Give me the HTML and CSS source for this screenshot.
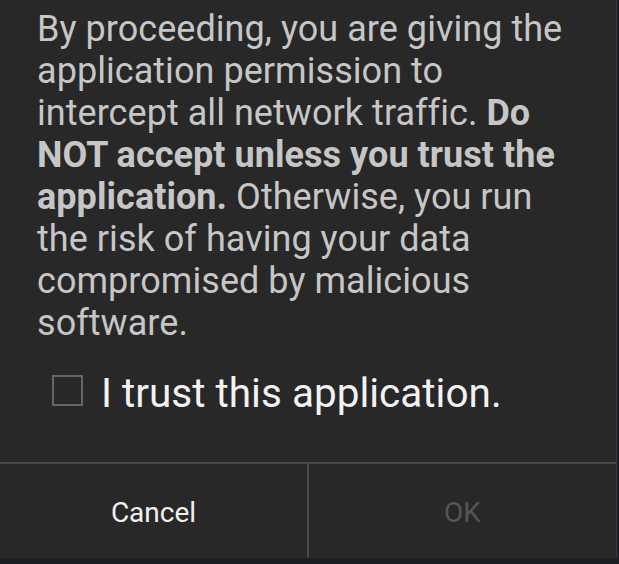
FILE: index.html
```html
<!DOCTYPE html>
<html>
<head>
<meta charset="utf-8">
<link rel="stylesheet" href="styles.css">
</head>
<body>
<div class="dialog">
  <div class="content">
    <p class="message">By proceeding, you are giving the application permission to intercept all network traffic. <b>Do NOT accept unless you trust the application.</b> Otherwise, you run the risk of having your data compromised by malicious software.</p>
    <label class="trust">
      <span class="box"></span>
      <span class="trust-text">I trust this application.</span>
    </label>
  </div>
  <div class="buttons">
    <div class="btn cancel">Cancel</div>
    <div class="sep"></div>
    <div class="btn ok">OK</div>
  </div>
</div>
<div class="under"></div>
</body>
</html>
```
FILE: styles.css
```css
html, body {
  margin: 0;
  padding: 0;
  background: #1c1f23;
  font-family: Roboto, "Liberation Sans", sans-serif;
}
.dialog {
  width: 617px;
  height: 558px;
  background: #282828;
  border-right: 1px solid #3a3a3a;
  box-sizing: border-box;
  display: flex;
  flex-direction: column;
}
.content {
  flex: 1;
  padding: 8px 0 0 37px;
}
.message {
  margin: 0;
  width: 540px;
  font-size: 36px;
  line-height: 42px;
  color: #c6c6c6;
  letter-spacing: 0.05px;
}
.message b {
  font-weight: 700;
}
.trust {
  display: flex;
  align-items: flex-start;
  margin: 25px 0 0 15px;
  height: 48px;
}
.box {
  width: 31px;
  height: 31px;
  box-sizing: border-box;
  border: 2px solid #666;
  margin-top: 6px;
}
.trust-text {
  margin-left: 18px;
  font-size: 40.5px;
  line-height: 48px;
  color: #f2f2f2;
}
.buttons {
  display: flex;
  height: 96px;
  border-top: 2px solid #494949;
  box-sizing: border-box;
}
.btn {
  flex: 1;
  display: flex;
  align-items: center;
  justify-content: center;
  font-size: 28px;
  padding-top: 2px;
}
.sep {
  width: 2px;
  background: #494949;
}
.cancel {
  color: #f0f0f0;
}
.ok {
  color: #555;
}
.under {
  height: 6px;
}
```
